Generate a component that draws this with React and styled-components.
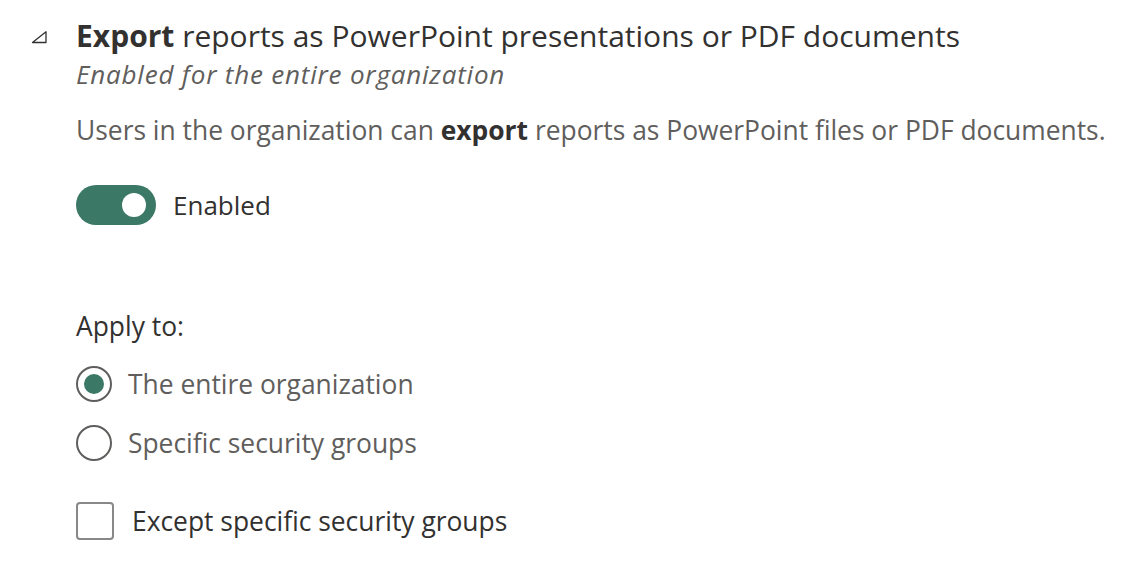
import React, { useState } from "react";
import styled, { createGlobalStyle } from "styled-components";

const GlobalStyle = createGlobalStyle`
  body {
    margin: 0;
    background: #ffffff;
    font-family: "Open Sans", "Noto Sans", sans-serif;
  }
`;

const Section = styled.section`
  display: flex;
  gap: 28px;
  padding: 18px 0 0 30px;
`;

const Caret = styled.div`
  width: 18px;
  padding-top: 10px;
`;

const Body = styled.div`
  display: flex;
  flex-direction: column;
`;

const Title = styled.h2`
  margin: 0;
  font-size: 30px;
  font-weight: 400;
  line-height: 36px;
  color: #323130;
  white-space: nowrap;
  b {
    font-weight: 700;
  }
`;

const Subtitle = styled.p`
  margin: 0;
  font-size: 26px;
  letter-spacing: 0.8px;
  font-style: italic;
  line-height: 40px;
  color: #605e5c;
`;

const Description = styled.p`
  margin: 20px 0 0;
  font-size: 26.4px;
  line-height: 32px;
  color: #605e5c;
  white-space: nowrap;
  b {
    font-weight: 700;
    color: #323130;
  }
`;

const ToggleRow = styled.label`
  display: flex;
  align-items: center;
  gap: 17px;
  margin-top: 39px;
  font-size: 26px;
  color: #323130;
  cursor: pointer;
`;

const Track = styled.span`
  position: relative;
  display: inline-block;
  width: 80px;
  height: 40px;
  border-radius: 20px;
  background: ${(p) => (p.$on ? "#3b7866" : "#c8c6c4")};
  &::after {
    content: "";
    position: absolute;
    top: 8px;
    left: ${(p) => (p.$on ? "46px" : "10px")};
    width: 24px;
    height: 24px;
    border-radius: 50%;
    background: #ffffff;
  }
`;

const GroupLabel = styled.div`
  margin-top: 85px;
  font-size: 26.4px;
  line-height: 32px;
  color: #323130;
`;

const RadioList = styled.div`
  display: flex;
  flex-direction: column;
  gap: 23px;
  margin-top: 24px;
`;

const RadioRow = styled.label`
  display: flex;
  align-items: center;
  gap: 16px;
  font-size: 26.4px;
  line-height: 36px;
  color: #605e5c;
  cursor: pointer;
`;

const RadioDot = styled.span`
  box-sizing: border-box;
  width: 36px;
  height: 36px;
  border-radius: 50%;
  border: 2px solid #605e5c;
  display: flex;
  align-items: center;
  justify-content: center;
  &::after {
    content: "";
    width: 20px;
    height: 20px;
    border-radius: 50%;
    background: ${(p) => (p.$checked ? "#3b7866" : "transparent")};
  }
`;

const CheckRow = styled.label`
  display: flex;
  align-items: center;
  gap: 18px;
  margin-top: 41px;
  font-size: 26.4px;
  line-height: 38px;
  color: #323130;
  cursor: pointer;
`;

const CheckBox = styled.span`
  box-sizing: border-box;
  width: 38px;
  height: 38px;
  border: 2px solid #8a8886;
  border-radius: 4px;
  background: ${(p) => (p.$checked ? "#3b7866" : "#ffffff")};
`;

export default function App() {
  const [enabled, setEnabled] = useState(true);
  const [scope, setScope] = useState("org");
  const [except, setExcept] = useState(false);

  return (
    <>
      <GlobalStyle />
      <Section>
        <Caret>
          <svg width="18" height="14" viewBox="0 0 18 14">
            <path d="M16 0.8 L16 11.5 L2.5 11.5 Z" fill="none" stroke="#323130" strokeWidth="1.3" strokeLinejoin="round" />
          </svg>
        </Caret>
        <Body>
          <Title>
            <b>Export</b> reports as PowerPoint presentations or PDF documents
          </Title>
          <Subtitle>Enabled for the entire organization</Subtitle>
          <Description>
            Users in the organization can <b>export</b> reports as PowerPoint files or PDF documents.
          </Description>
          <ToggleRow onClick={() => setEnabled(!enabled)}>
            <Track $on={enabled} />
            {enabled ? "Enabled" : "Disabled"}
          </ToggleRow>
          <GroupLabel>Apply to:</GroupLabel>
          <RadioList>
            <RadioRow onClick={() => setScope("org")}>
              <RadioDot $checked={scope === "org"} />
              The entire organization
            </RadioRow>
            <RadioRow onClick={() => setScope("groups")}>
              <RadioDot $checked={scope === "groups"} />
              Specific security groups
            </RadioRow>
          </RadioList>
          <CheckRow onClick={() => setExcept(!except)}>
            <CheckBox $checked={except} />
            Except specific security groups
          </CheckRow>
        </Body>
      </Section>
    </>
  );
}
